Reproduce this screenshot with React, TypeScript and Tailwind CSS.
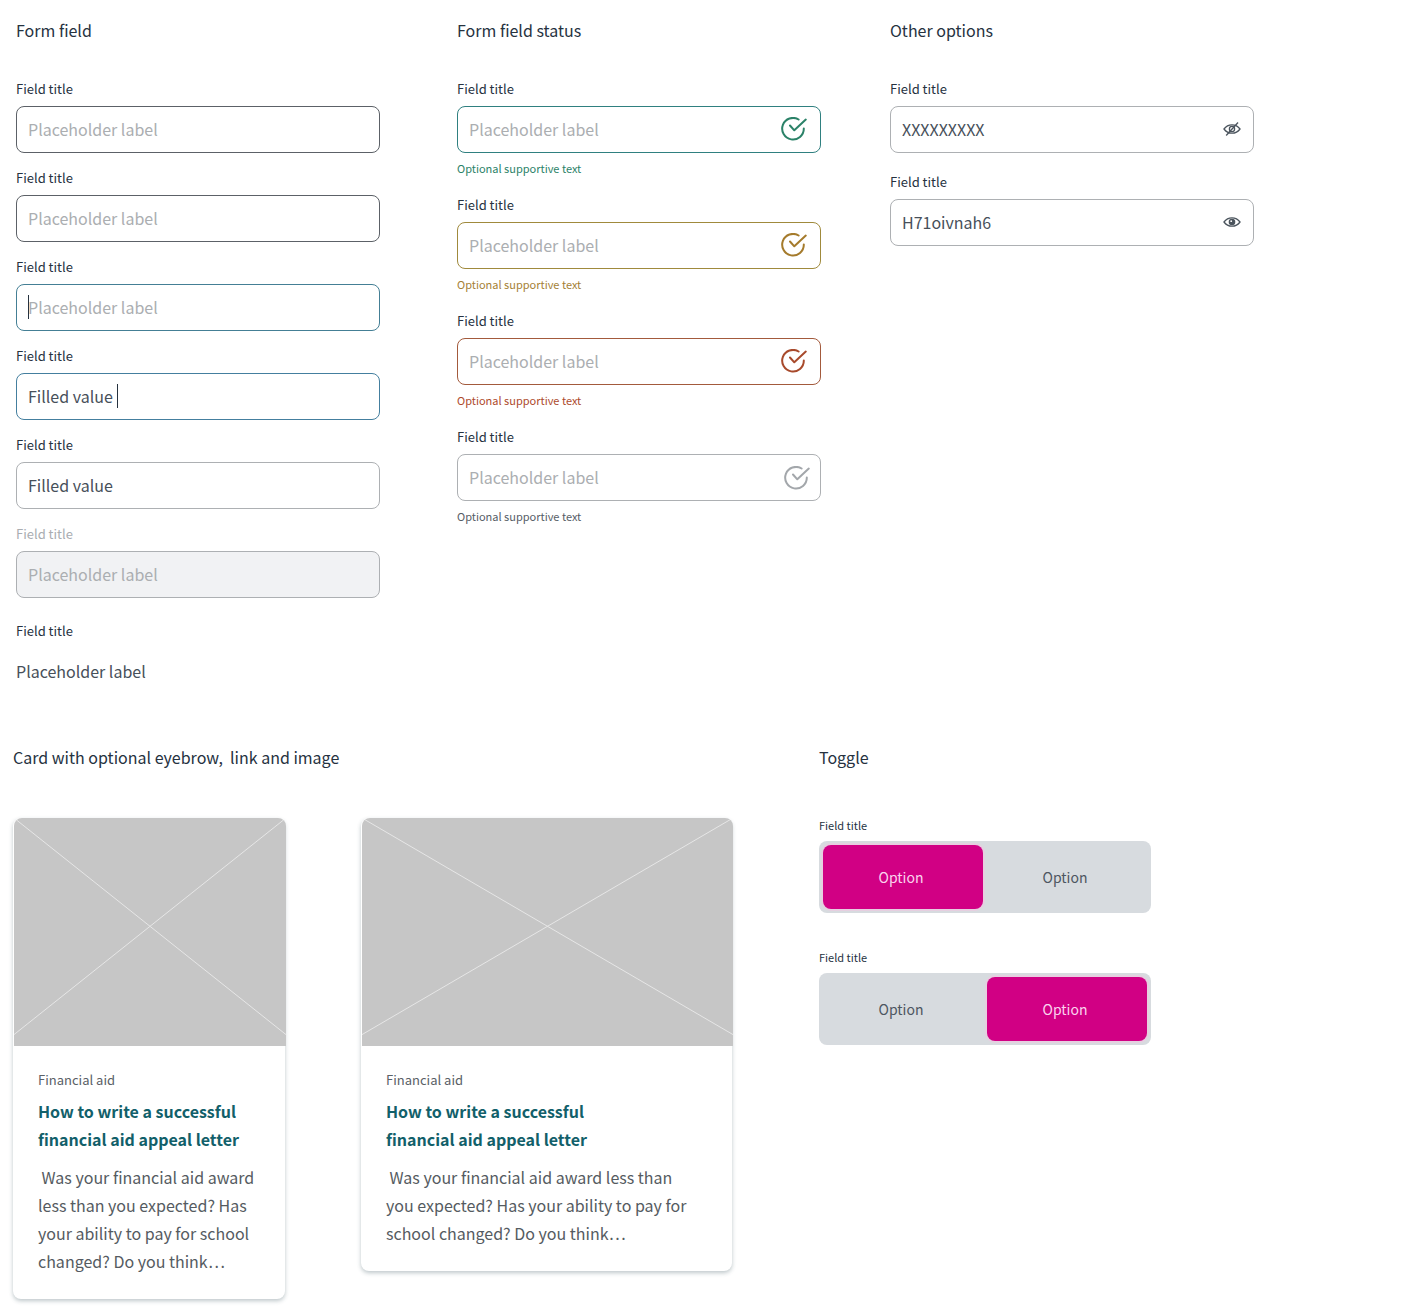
import { useId, useState } from "react";
import clsx from "clsx";

type Status = "success" | "warning" | "error" | "neutral";

const statusStyles: Record<Status, { border: string; text: string; icon: string }> = {
  success: { border: "border-[#2f8080]", text: "text-[#2b8268]", icon: "top-[11px] right-3.5 text-[#2b8268]" },
  warning: { border: "border-[#a08a3c]", text: "text-[#a57f35]", icon: "top-[11px] right-3.5 text-[#a57b2c]" },
  error: { border: "border-[#a35a3c]", text: "text-[#ad4a2c]", icon: "top-[11px] right-3.5 text-[#a84a2c]" },
  neutral: { border: "border-[#adb0b3]", text: "text-[#565d66]", icon: "top-3 right-[11px] text-[#a3a7ab]" },
};

function CheckIcon({ className }: { className?: string }) {
  return (
    <svg
      width="26"
      height="24"
      viewBox="0 0 26 24"
      fill="none"
      stroke="currentColor"
      strokeWidth="2"
      strokeLinecap="round"
      strokeLinejoin="round"
      className={className}
      aria-hidden="true"
    >
      <path d="M17.6 2.5A10.800 10.800 0 1 0 22.800 11.600" />
      <path d="M9 8.500l4.300 4.800L24.800 2.600" />
    </svg>
  );
}

function EyeIcon({ hidden }: { hidden?: boolean }) {
  return (
    <svg width="18" height="16" viewBox="0 0 18 16" fill="none" stroke="currentColor" strokeWidth="1.3" aria-hidden="true">
      <path d="M1 8C3 5.200 5.800 3.800 9 3.800S15 5.200 17 8C15 10.800 12.200 12.200 9 12.200S3 10.800 1 8Z" />
      {hidden ? (
        <>
          <circle cx="9" cy="8" r="2.600" />
          <path d="M15 1.500L3.200 14.500" />
        </>
      ) : (
        <>
          <circle cx="9" cy="8" r="3.300" fill="currentColor" stroke="none" />
          <circle cx="8.200" cy="7.200" r="0.900" fill="white" stroke="none" />
        </>
      )}
    </svg>
  );
}

interface FieldProps {
  value?: string;
  border?: string;
  disabled?: boolean;
  plain?: boolean;
  caret?: string;
  status?: Status;
}

function Field({ value = "", border = "border-[#adb0b3]", disabled, plain, caret, status }: FieldProps) {
  const id = useId();
  const [text, setText] = useState(value);
  const styles = status && statusStyles[status];

  return (
    <div className="w-full max-w-[364px]">
      <label htmlFor={id} className={clsx("block text-[13px] leading-6", disabled ? "text-[#a9adb1]" : "text-[#26323f]")}>
        Field title
      </label>
      <div className="relative mt-[5px]">
        <input
          id={id}
          type="text"
          value={text}
          onChange={(e) => setText(e.target.value)}
          placeholder="Placeholder label"
          disabled={disabled}
          readOnly={plain}
          className={clsx(
            "block h-[47px] w-full rounded-lg pb-0.5 text-base text-[#47505a] placeholder:text-[#abaeb1] focus:outline-none",
            !plain && "border px-[11px]",
            !plain && (styles ? styles.border : border),
            disabled ? "bg-[#f1f2f4]" : "bg-transparent"
          )}
        />
        {caret && <span className={clsx("absolute top-[11px] h-6 w-px bg-[#26323f]", caret)} />}
        {styles && <CheckIcon className={clsx("absolute", styles.icon)} />}
      </div>
      {styles && <p className={clsx("mt-[5px] text-[11px] leading-5", styles.text)}>Optional supportive text</p>}
    </div>
  );
}

function PasswordField({ value, visible }: { value: string; visible?: boolean }) {
  const id = useId();
  const [text, setText] = useState(value);

  return (
    <div className="w-full max-w-[364px]">
      <label htmlFor={id} className="block text-[13px] leading-6 text-[#26323f]">
        Field title
      </label>
      <div className="mt-[5px] flex h-[47px] items-center rounded-lg border border-[#adb0b3] pr-3 pb-0.5 pl-[11px]">
        <input
          id={id}
          type="text"
          value={text}
          onChange={(e) => setText(e.target.value)}
          className="h-full min-w-0 flex-1 text-base text-[#47505a] focus:outline-none"
        />
        <button type="button" aria-label={visible ? "Hide value" : "Show value"} className="text-[#4b545d]">
          <EyeIcon hidden={!visible} />
        </button>
      </div>
    </div>
  );
}

function Card({ className }: { className: string }) {
  return (
    <article className={clsx("rounded-lg bg-white shadow-[0_2px_4px_rgba(40,70,80,0.3)]", className)}>
      <svg viewBox="0 0 100 100" preserveAspectRatio="none" className="ml-px block h-[228px] w-full rounded-t-lg bg-[#c6c6c6]" aria-hidden="true">
        <path d="M0 0L100 95M100 0L0 95" stroke="#e6e6e6" strokeWidth="1" vectorEffect="non-scaling-stroke" />
      </svg>
      <div className="px-[25px] pt-6 pb-6">
        <p className="text-[13px] leading-5 text-[#5a6066]">Financial aid</p>
        <h3 className="mt-[7px] max-w-[220px] text-base leading-7 font-bold text-[#12606a]">
          <a href="#">How to write a successful financial aid appeal letter</a>
        </h3>
        <p className="mt-2.5 max-w-[312px] text-base leading-7 text-[#555b61]">
          &nbsp;Was your financial aid award less than you expected? Has your ability to pay for school changed? Do you think…
        </p>
      </div>
    </article>
  );
}

function Toggle({ initial }: { initial: number }) {
  const [selected, setSelected] = useState(initial);
  const id = useId();

  return (
    <div className="w-full max-w-[332px]">
      <p id={id} className="text-[11px] leading-5 text-[#26323f]">
        Field title
      </p>
      <div role="group" aria-labelledby={id} className="mt-1.5 grid grid-cols-2 gap-1 rounded-lg bg-[#d7dbdf] p-1">
        {[0, 1].map((i) => (
          <button
            key={i}
            type="button"
            aria-pressed={selected === i}
            onClick={() => setSelected(i)}
            className={clsx(
              "h-16 rounded-lg pr-1 text-sm",
              selected === i ? "bg-[#d10084] text-[#fbd3ee] ring-2 ring-[#e6cfe0]" : "text-[#4d5661]"
            )}
          >
            Option
          </button>
        ))}
      </div>
    </div>
  );
}

function Heading({ children }: { children: React.ReactNode }) {
  return <h2 className="text-base leading-7 whitespace-pre-wrap text-[#26323f]">{children}</h2>;
}

export default function App() {
  return (
    <main className="bg-white pt-4 pb-3 font-['Noto_Sans_CJK_SC',sans-serif]">
      <div className="grid grid-cols-[441fr_433fr_506fr] px-4">
        <section>
          <Heading>Form field</Heading>
          <div className="mt-[33px] flex flex-col gap-[13px]">
            <Field border="border-[#5c6167]" />
            <Field border="border-[#5c6167]" />
            <Field border="border-[#447f95]" caret="left-3" />
            <Field value="Filled value" border="border-[#447f9f]" caret="left-[101px]" />
            <Field value="Filled value" />
            <Field disabled />
          </div>
          <div className="mt-[21px]">
            <Field value="Placeholder label" plain />
          </div>
        </section>

        <section>
          <Heading>Form field status</Heading>
          <div className="mt-[33px] flex flex-col gap-[15px]">
            <Field status="success" />
            <Field status="warning" />
            <Field status="error" />
            <Field status="neutral" />
          </div>
        </section>

        <section>
          <Heading>Other options</Heading>
          <div className="mt-[33px] flex flex-col gap-[17px]">
            <PasswordField value="XXXXXXXXX" />
            <PasswordField value="H71oivnah6" visible />
          </div>
        </section>
      </div>

      <div className="mt-12 grid grid-cols-[806fr_593fr] pl-[13px]">
        <section>
          <Heading>{"Card with optional eyebrow,  link and image"}</Heading>
          <div className="mt-[47px] flex items-start gap-[76px]">
            <Card className="w-[272px]" />
            <Card className="w-[371px]" />
          </div>
        </section>

        <section>
          <Heading>Toggle</Heading>
          <div className="mt-11 flex flex-col gap-[34px]">
            <Toggle initial={0} />
            <Toggle initial={1} />
          </div>
        </section>
      </div>
    </main>
  );
}
